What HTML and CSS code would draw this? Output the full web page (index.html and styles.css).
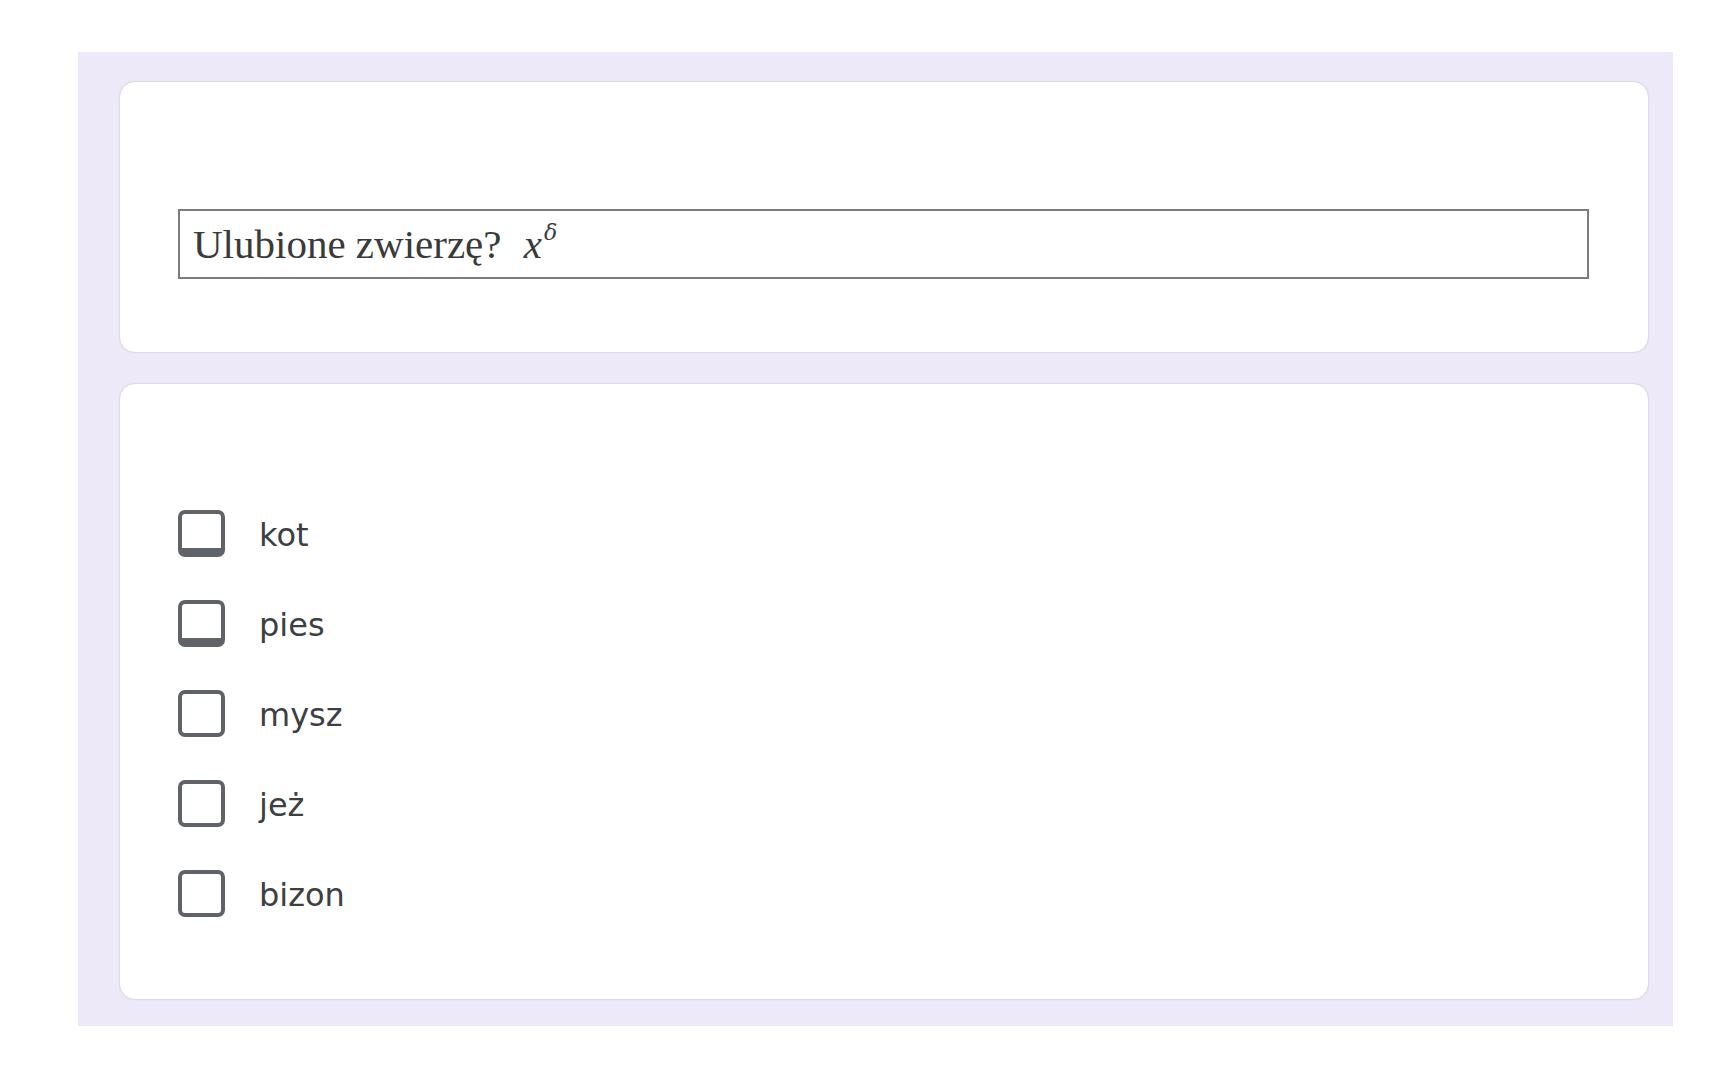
FILE: index.html
```html
<!DOCTYPE html>
<html lang="pl">
<head>
<meta charset="utf-8">
<title>Ulubione zwierzę</title>
<link rel="stylesheet" href="styles.css">
</head>
<body>
<div class="page">
  <div class="form">
    <section class="card card-question">
      <div class="question-box">Ulubione zwierzę? <span class="math"><i>x</i><sup>δ</sup></span></div>
    </section>
    <section class="card card-options">
      <ul class="options">
        <li class="option"><span class="box box-pressed"></span><span class="label">kot</span></li>
        <li class="option"><span class="box box-pressed"></span><span class="label">pies</span></li>
        <li class="option"><span class="box"></span><span class="label">mysz</span></li>
        <li class="option"><span class="box"></span><span class="label">jeż</span></li>
        <li class="option"><span class="box"></span><span class="label">bizon</span></li>
      </ul>
    </section>
  </div>
</div>
</body>
</html>
```
FILE: styles.css
```css
html, body {
  margin: 0;
  padding: 0;
  background: #ffffff;
}

.page {
  padding: 52px 0 0 78px;
}

.form {
  width: 1595px;
  box-sizing: border-box;
  background: #ede9f8;
  padding: 29px 24px 26px 41px;
  display: flex;
  flex-direction: column;
  gap: 30px;
}

.card {
  background: #ffffff;
  border: 1px solid #dadce0;
  border-radius: 16px;
  box-shadow: 0 0 2px rgba(0, 0, 0, 0.06);
  box-sizing: border-box;
}

.card-question {
  height: 272px;
  padding: 127px 59px 0 58px;
}

.question-box {
  height: 70px;
  box-sizing: border-box;
  border: 2px solid #7d7d7d;
  padding: 0 13px;
  display: flex;
  align-items: center;
  font-family: "Liberation Serif", "DejaVu Serif", serif;
  font-size: 41px;
  color: #3a3a3a;
  white-space: pre;
}

.math {
  margin-left: 12px;
}

.math i {
  font-family: "Liberation Serif", serif;
  font-style: italic;
}

.math sup {
  font-family: "DejaVu Serif", serif;
  font-size: 22px;
  font-style: italic;
  vertical-align: 18px;
  margin-left: 2px;
}

.card-options {
  height: 617px;
  padding: 126px 0 0 58px;
}

.options {
  list-style: none;
  margin: 0;
  padding: 0;
  display: flex;
  flex-direction: column;
  gap: 43px;
}

.option {
  display: flex;
  align-items: center;
  gap: 34px;
  height: 47px;
}

.box {
  width: 47px;
  height: 47px;
  box-sizing: border-box;
  border: 4px solid #5f6368;
  border-radius: 7px;
  background: #ffffff;
  flex: none;
}

.box-pressed {
  border-bottom-width: 9px;
}

.label {
  font-family: "DejaVu Sans", sans-serif;
  font-size: 32px;
  color: #3c4043;
  position: relative;
  top: 1px;
}
```
